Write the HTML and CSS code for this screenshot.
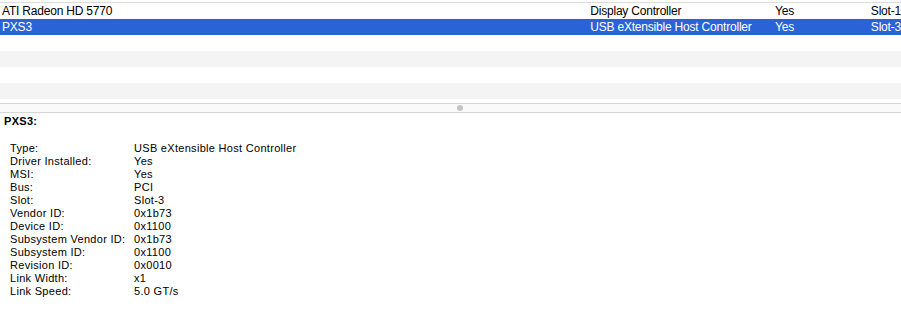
FILE: index.html
```html
<!DOCTYPE html>
<html lang="en">
 <head>
  <title>PCI Cards</title>
  <link rel="stylesheet" href="styles.css">
 </head>
 <body>
  <div id="list">
   <div class="row">
    <span class="c-name">ATI Radeon HD 5770</span>
    <span class="c-type">Display Controller</span>
    <span class="c-drv">Yes</span>
    <span class="c-slot">Slot-1</span>
   </div>
   <div class="row selected">
    <span class="c-name">PXS3</span>
    <span class="c-type">USB eXtensible Host Controller</span>
    <span class="c-drv">Yes</span>
    <span class="c-slot">Slot-3</span>
   </div>
   <div class="row"></div>
   <div class="row alt"></div>
   <div class="row"></div>
   <div class="row alt"></div>
  </div>
  <div id="splitter"><span class="grip"></span></div>
  <div id="detail">
   <h1>PXS3:</h1>
   <dl>
    <dt>Type:</dt><dd>USB eXtensible Host Controller</dd>
    <dt>Driver Installed:</dt><dd>Yes</dd>
    <dt>MSI:</dt><dd>Yes</dd>
    <dt>Bus:</dt><dd>PCI</dd>
    <dt>Slot:</dt><dd>Slot-3</dd>
    <dt>Vendor ID:</dt><dd>0x1b73</dd>
    <dt>Device ID:</dt><dd>0x1100</dd>
    <dt>Subsystem Vendor ID:</dt><dd>0x1b73</dd>
    <dt>Subsystem ID:</dt><dd>0x1100</dd>
    <dt>Revision ID:</dt><dd>0x0010</dd>
    <dt>Link Width:</dt><dd>x1</dd>
    <dt>Link Speed:</dt><dd>5.0 GT/s</dd>
   </dl>
  </div>
 </body>
</html>
```

FILE: styles.css
```css
body {
    margin: 0;
    background: white;
    font-family: "Liberation Sans", Arial, sans-serif;
    color: #000;
    overflow: hidden;
}

#list {
    margin-top: 2px;
    border-top: 1px solid #dcdcdc;
    padding-bottom: 4px;
}

.row {
    height: 16px;
    display: flex;
    align-items: center;
    font-size: 12px;
    letter-spacing: -0.2px;
    white-space: nowrap;
    overflow: hidden;
}

.row.alt {
    background: #f4f4f4;
}

.row.selected {
    background: #2a63d6;
    color: white;
}

.c-name {
    padding-left: 2px;
    width: 589px;
}

.c-type {
    width: 185px;
}

.c-drv {
    width: 96px;
}

#splitter {
    height: 8px;
    border-top: 1px solid #d6d6d6;
    border-bottom: 1px solid #d6d6d6;
    background: #fafafa;
    display: flex;
    justify-content: center;
    align-items: center;
}

.grip {
    width: 6px;
    height: 6px;
    border-radius: 50%;
    background: #c4c4c4;
    margin-left: 18px;
}

#detail {
    font-size: 11px;
    letter-spacing: 0.3px;
    padding-left: 4px;
}

h1 {
    font-size: 11px;
    font-weight: bold;
    margin: 2px 0 14px 0;
    line-height: 13px;
}

dl {
    display: grid;
    grid-template-columns: 124px auto;
    margin: 0 0 0 6px;
    line-height: 13px;
}

dt, dd {
    margin: 0;
}
```
